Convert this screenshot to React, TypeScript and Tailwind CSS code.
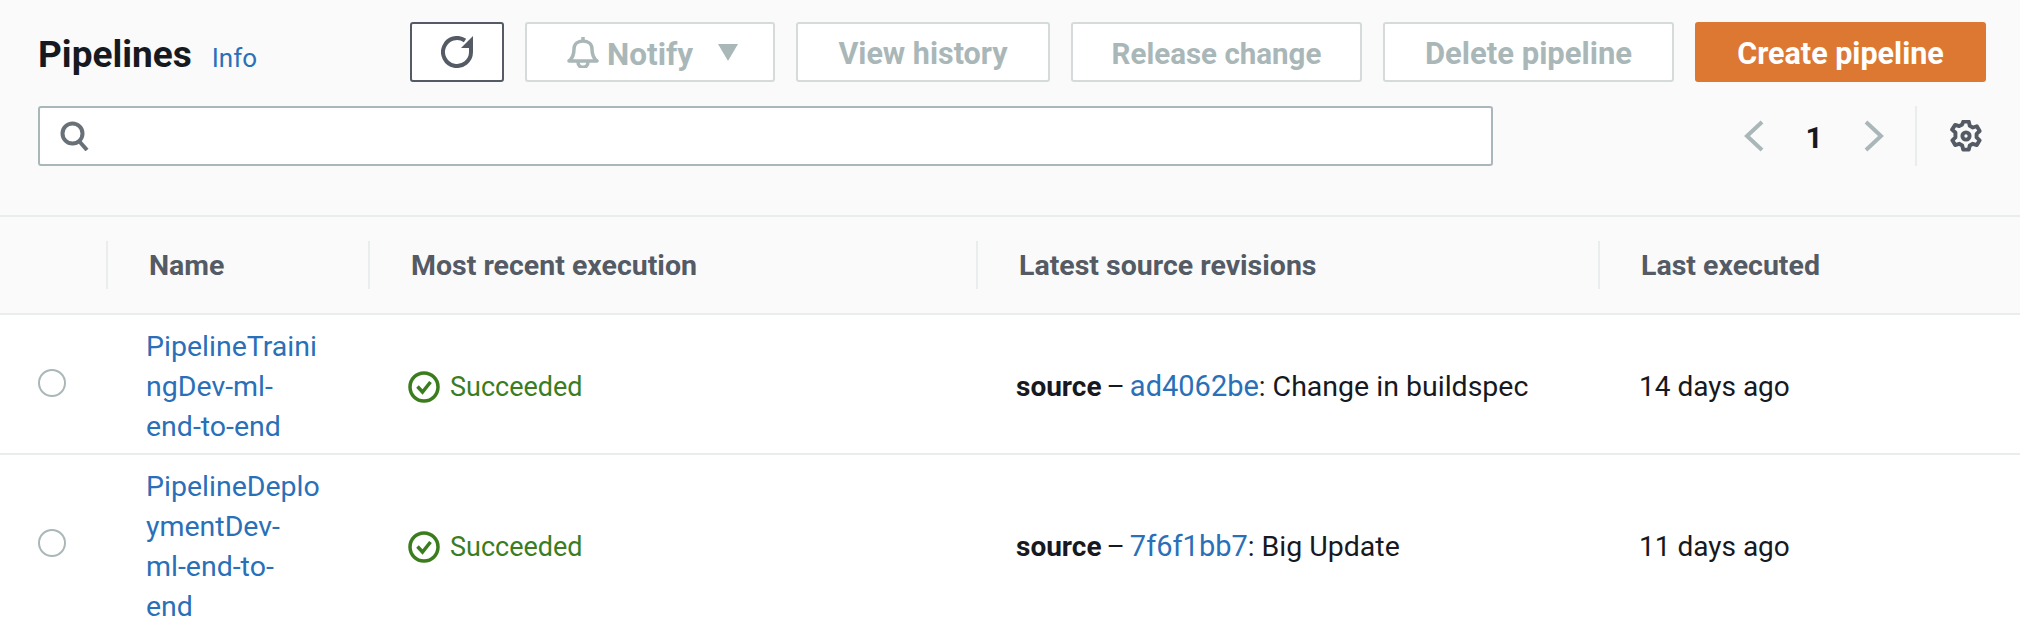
import React from 'react';

const font = "font-['Roboto',sans-serif]";

const Refresh = () => (
  <svg width="32" height="32" viewBox="0 0 32 32" fill="none">
    <path d="M30 12v4A14 14 0 1 1 24 4.5" stroke="#545b64" strokeWidth="4" />
    <path d="M32 0v12H20z" fill="#545b64" />
  </svg>
);

const Bell = () => (
  <svg width="32" height="32" viewBox="0 0 32 32" fill="none" stroke="#aab7b8" strokeWidth="3.5" strokeLinejoin="round">
    <path d="M2 25c4-3 5-6 5-12 0-5 4-8 9-8s9 3 9 8c0 6 1 9 5 12z" />
    <path d="M16 1v4" />
    <path d="M11 26c0 7 10 7 10 0" />
  </svg>
);

const Gear = () => (
  <svg width="32" height="32" viewBox="0.5 0.5 23 23" fill="none" stroke="#545b64" strokeWidth="2.8" strokeLinejoin="round">
    <circle cx="12" cy="12" r="2.6" />
    <path d="M10 1.7h4l.7 3 2.2 1.2 2.9-.9 2 3.4-2.2 2.1v2.5l2.2 2.1-2 3.4-2.9-.9-2.2 1.2-.7 3h-4l-.7-3-2.2-1.2-2.9.9-2-3.4 2.2-2.1V9.5L2 7.4 4.2 4l2.9.9 2.2-1.2z" />
  </svg>
);

const StatusCheck = () => (
  <svg width="32" height="32" viewBox="0 0 32 32" fill="none" stroke="#3b7d1e" strokeWidth="3.5">
    <circle cx="16" cy="16" r="14" />
    <path d="M9.5 15.5l5 5.5 8-10" />
  </svg>
);

const ToolbarButton = ({ label, className }: { label: string; className: string }) => (
  <button className={`h-[60px] rounded-[3px] border-2 border-[#d5dbdb] bg-white pt-[4px] font-bold text-[#aab7b8] ${className}`}>
    {label}
  </button>
);

const columns = 'grid grid-cols-[106px_262px_608px_622px_1fr]';

const rows = [
  {
    name: ['PipelineTraini', 'ngDev-ml-', 'end-to-end'],
    revision: 'ad4062be',
    message: 'Change in buildspec',
    executed: '14 days ago',
  },
  {
    name: ['PipelineDeplo', 'ymentDev-', 'ml-end-to-', 'end'],
    revision: '7f6f1bb7',
    message: 'Big Update',
    executed: '11 days ago',
  },
];

const headers = ['Name', 'Most recent execution', 'Latest source revisions', 'Last executed'];

export default function App() {
  return (
    <div className={`h-[630px] w-[2020px] overflow-hidden bg-white text-[28px] text-[#16191f] ${font}`}>
      {/* Toolbar */}
      <div className="h-[215px] bg-[#fafafa] pt-[22px] pl-[38px] pr-[34px]">
        <div className="flex items-center gap-[21px]">
          <div className="flex flex-1 items-baseline gap-[20px] pt-[5px]">
            <h1 className="text-[37px] font-bold">Pipelines</h1>
            <span className="text-[26px] text-[#2a70b8]">Info</span>
          </div>
          <button className="flex h-[60px] w-[94px] items-center justify-center rounded-[3px] border-2 border-[#545b64] bg-white">
            <Refresh />
          </button>
          <button className="flex h-[60px] w-[250px] items-center rounded-[3px] border-2 border-[#d5dbdb] bg-white pl-[40px] font-bold text-[#aab7b8]">
            <Bell />
            <span className="ml-[8px] pt-[4px] text-[31.5px]">Notify</span>
            <span className="ml-[25px] h-0 w-0 border-x-[10px] border-t-[17px] border-x-transparent border-t-[#aab7b8]" />
          </button>
          <ToolbarButton label="View history" className="w-[254px] text-[30.5px]" />
          <ToolbarButton label="Release change" className="w-[291px] text-[29.5px]" />
          <ToolbarButton label="Delete pipeline" className="w-[291px] text-[31px]" />
          <button className="h-[60px] w-[291px] rounded-[3px] bg-[#dd7832] pt-[4px] text-[30.5px] font-bold text-white">
            Create pipeline
          </button>
        </div>

        <div className="mt-[23px] flex items-center">
          <div className="flex h-[60px] w-[1455px] items-center rounded-[3px] border-2 border-[#aab7b8] bg-white pl-[20px]">
            <svg width="30" height="30" viewBox="0 0 30 30" fill="none" stroke="#687078" strokeWidth="4">
              <circle cx="12.5" cy="12.5" r="10" />
              <path d="M19 20l8 9" />
            </svg>
          </div>
          <div className="ml-auto flex h-[60px] items-center pr-[4px]">
            <svg width="20" height="32" viewBox="0 0 20 32" fill="none" stroke="#aab7b8" strokeWidth="4">
              <path d="M18 2L3 16l15 14" />
            </svg>
            <span className="w-[100px] pt-[4px] text-center text-[30px] font-bold">1</span>
            <svg width="20" height="32" viewBox="0 0 20 32" fill="none" stroke="#aab7b8" strokeWidth="4">
              <path d="M2 2l15 14L2 30" />
            </svg>
            <div className="ml-[31px] h-[60px] w-[2px] bg-[#eaeded]" />
            <div className="ml-[33px]">
              <Gear />
            </div>
          </div>
        </div>
      </div>

      {/* Table header */}
      <div className={`${columns} h-[100px] border-y-2 border-[#eaeded] bg-[#fafafa] pt-[24px]`}>
        <div />
        {headers.map(header => (
          <div key={header} className="h-[48px] border-l-2 border-[#eaeded] pt-[5px] pl-[41px] text-[28.5px] leading-[40px] font-bold text-[#545b64]">
            {header}
          </div>
        ))}
      </div>

      {/* Rows */}
      {rows.map(row => (
        <div key={row.revision} className={`${columns} items-center border-b-2 border-[#eaeded] pt-[12px] pb-[6px]`}>
          <div className="pb-[8px] pl-[38px]">
            <div className="h-[28px] w-[28px] rounded-full border-2 border-[#aab7b8] bg-white" />
          </div>
          <div className="pl-[40px] text-[28.5px] leading-[40px] text-[#2a70b8]">
            {row.name.map(line => (
              <div key={line}>{line}</div>
            ))}
          </div>
          <div className="flex items-center gap-[10px] pl-[40px] text-[27px] text-[#3b7d1e]">
            <StatusCheck />
            <span>Succeeded</span>
          </div>
          <div className="pl-[40px]">
            <span className="font-bold">source</span> <span className="-mx-[2px]">–</span>{' '}
            <span className="text-[29px] text-[#2a70b8]">{row.revision}</span>: <span className="text-[28.5px]">{row.message}</span>
          </div>
          <div className="pl-[41px]">{row.executed}</div>
        </div>
      ))}
    </div>
  );
}
